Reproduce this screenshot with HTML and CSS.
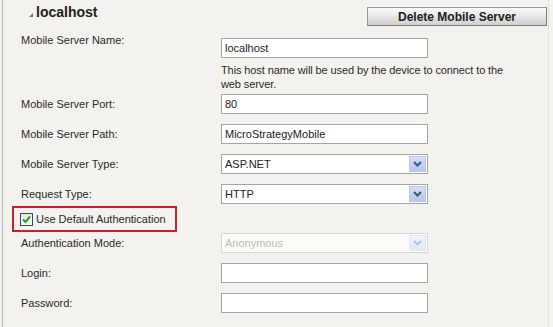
FILE: index.html
```html
<!DOCTYPE html>
<html>
<head>
    <title>Mobile Server</title>
    <link rel="stylesheet" href="styles.css">
</head>
<body>
    <div class="panel">
        <div class="header">
            <div class="title"><span class="arrow"></span>localhost</div>
            <button class="btn">Delete Mobile Server</button>
        </div>

        <div class="row row-top">
            <label>Mobile Server Name:</label>
            <div class="field">
                <input type="text" value="localhost">
                <p class="help">This host name will be used by the device to connect to the web server.</p>
            </div>
        </div>

        <div class="row">
            <label>Mobile Server Port:</label>
            <input type="text" value="80">
        </div>

        <div class="row">
            <label>Mobile Server Path:</label>
            <input type="text" value="MicroStrategyMobile">
        </div>

        <div class="row">
            <label>Mobile Server Type:</label>
            <div class="select">
                <select><option>ASP.NET</option></select>
                <span class="drop"><svg width="9" height="6" viewBox="0 0 9 6"><path d="M1 1 L4.5 4.5 L8 1" fill="none" stroke="#44587c" stroke-width="2.2"/></svg></span>
            </div>
        </div>

        <div class="row">
            <label>Request Type:</label>
            <div class="select">
                <select><option>HTTP</option></select>
                <span class="drop"><svg width="9" height="6" viewBox="0 0 9 6"><path d="M1 1 L4.5 4.5 L8 1" fill="none" stroke="#44587c" stroke-width="2.2"/></svg></span>
            </div>
        </div>

        <div class="check-row">
            <span class="checkbox"><svg width="9" height="9" viewBox="0 0 9 9"><path d="M1 4.5 L3.5 7 L8 1.5" fill="none" stroke="#21a121" stroke-width="2"/></svg></span>
            <span>Use Default Authentication</span>
        </div>

        <div class="row row-auth">
            <label>Authentication Mode:</label>
            <div class="select disabled">
                <select disabled><option>Anonymous</option></select>
                <span class="drop"><svg width="9" height="6" viewBox="0 0 9 6"><path d="M1 1 L4.5 4.5 L8 1" fill="none" stroke="#b9c6de" stroke-width="2"/></svg></span>
            </div>
        </div>

        <div class="row">
            <label>Login:</label>
            <input type="text" value="">
        </div>

        <div class="row">
            <label>Password:</label>
            <input type="password" value="">
        </div>
    </div>
</body>
</html>
```

FILE: styles.css
```css
body {
    font-family: "Liberation Sans", Arial, sans-serif;
    font-size: 11px;
    color: #2a2a2a;
    margin: 0;
    padding: 0;
    background: #f3f2ee;
}
.panel {
    margin-left: 2px;
    width: 545px;
    height: 327px;
    border-left: 1px solid #b8b8b4;
    border-right: 1px solid #e2e1dc;
}
.header {
    display: flex;
    justify-content: space-between;
    align-items: flex-start;
    padding: 7px 1px 0 26px;
    height: 23px;
}
.title {
    display: flex;
    align-items: center;
    gap: 3px;
    font-size: 14px;
    font-weight: bold;
    color: #222;
    line-height: 16px;
    margin-top: -3px;
}
.arrow {
    display: inline-block;
    width: 0;
    height: 0;
    border-bottom: 4px solid #777;
    border-left: 4px solid transparent;
    margin-top: 5px;
}
.btn {
    width: 180px;
    height: 19px;
    padding: 0;
    font-family: "Liberation Sans", Arial, sans-serif;
    font-size: 12px;
    font-weight: bold;
    color: #222;
    background: linear-gradient(#fbfbfb, #e6e6e6 50%, #d0d0d0);
    border: 1px solid #9a9a9a;
    border-right-color: #7d7d7d;
    border-bottom-color: #7d7d7d;
}
.row {
    display: grid;
    grid-template-columns: 200px 207px;
    align-items: center;
    padding-left: 18px;
    margin-top: 10px;
    line-height: 20px;
}
.row-top {
    align-items: start;
    margin-top: 0;
}
.row-top .field {
    padding-top: 8px;
}
.row-top + .row {
    margin-top: 3px;
}
.help {
    margin: 5px 0 0;
    width: 300px;
    line-height: 14px;
    letter-spacing: -0.1px;
}
input, select {
    box-sizing: border-box;
    width: 207px;
    height: 20px;
    margin: 0;
    padding: 0 3px;
    font-family: "Liberation Sans", Arial, sans-serif;
    font-size: 11px;
    color: #222;
    background: #fff;
    border: 1px solid #a5a5a5;
    outline: none;
}
.select {
    position: relative;
    width: 207px;
    height: 20px;
}
select {
    appearance: none;
    -webkit-appearance: none;
}
.drop {
    position: absolute;
    top: 2px;
    right: 2px;
    width: 17px;
    height: 16px;
    box-sizing: border-box;
    display: flex;
    align-items: center;
    justify-content: center;
    background: linear-gradient(#d3def9, #b6c7ee);
    border: 1px solid #b9c8ec;
}
.disabled select {
    color: #a6a6a6;
    border-color: #cfcdc4;
}
.disabled .drop {
    background: linear-gradient(#eef2fb, #e1e8f7);
    border-color: #e3e9f6;
}
.check-row {
    display: flex;
    align-items: center;
    gap: 3px;
    width: 155px;
    height: 22px;
    margin: 2px 0 0 9px;
    padding-left: 6px;
    border: 2px solid #c8202a;
    box-sizing: content-box;
    font-size: 11px;
}
.checkbox {
    box-sizing: border-box;
    width: 13px;
    height: 13px;
    display: flex;
    align-items: center;
    justify-content: center;
    background: linear-gradient(#e8e8e2, #fafafa);
    border: 1px solid #1f4f7d;
}
.row-auth {
    margin-top: 1px;
}
```
